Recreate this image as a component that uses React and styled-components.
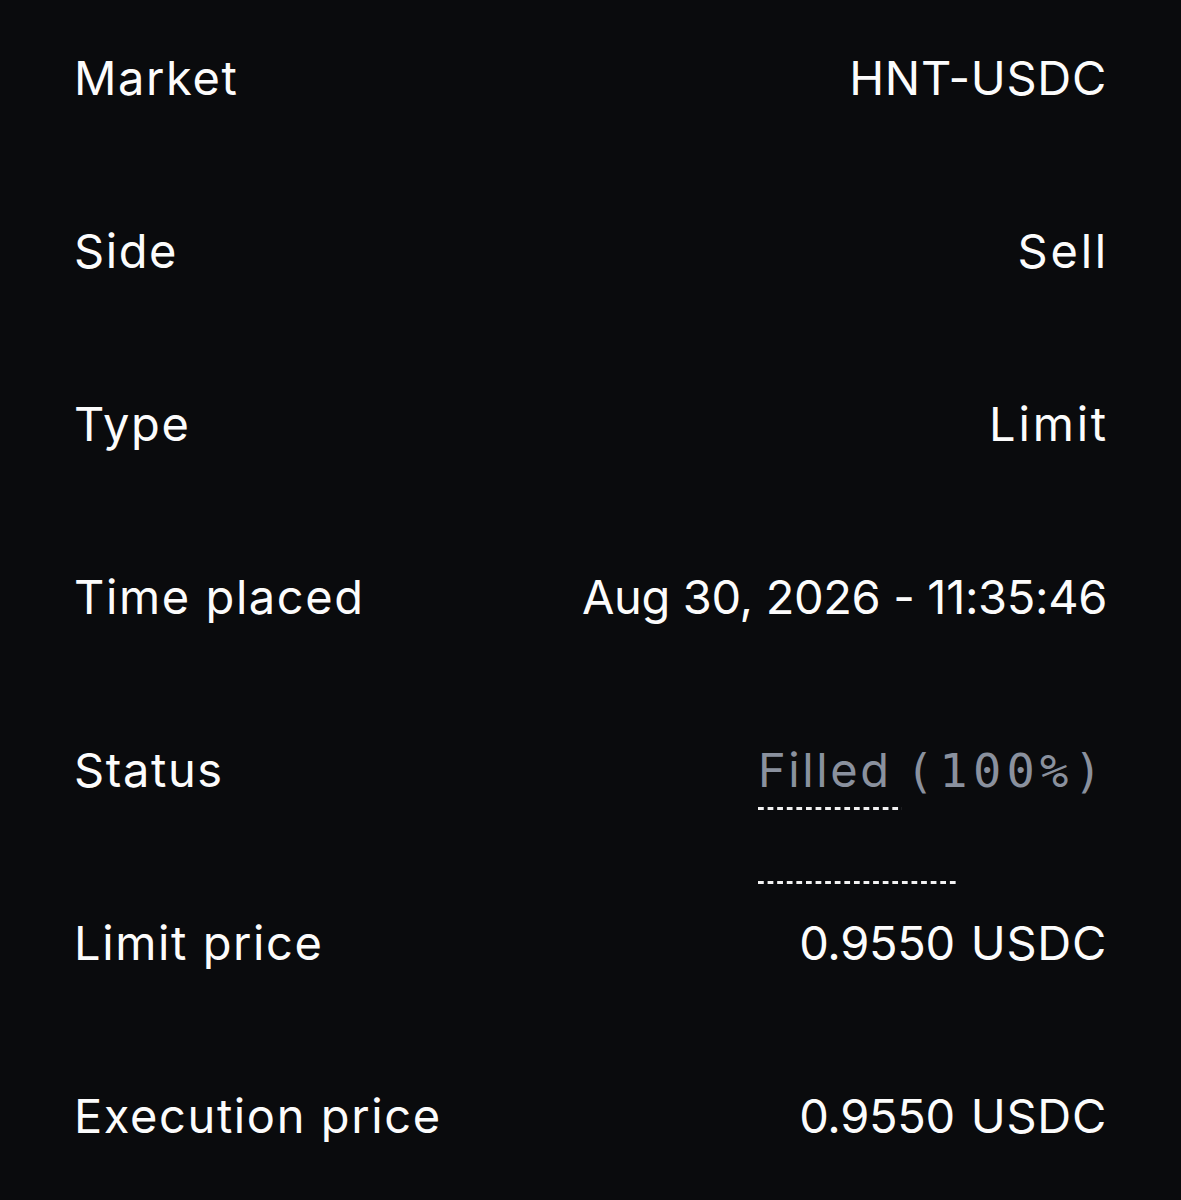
import styled, { createGlobalStyle } from "styled-components";

const GlobalStyle = createGlobalStyle`
  html, body {
    margin: 0;
    padding: 0;
    background: #0a0b0d;
  }
  body {
    font-family: Inter, "Noto Sans", sans-serif;
    -webkit-font-smoothing: antialiased;
  }
`

const Page = styled.div`
  width: 1181px;
  height: 1200px;
  box-sizing: border-box;
  background: #0a0b0d;
  padding: 50px 74px 0 75px;
  overflow: hidden;
`

const Row = styled.div`
  display: flex;
  justify-content: space-between;
  align-items: flex-start;
  height: 173px;
`

const Label = styled.div`
  font-size: 47px;
  line-height: 1.2;
  color: #fcfcfc;
  letter-spacing: 1.6px;
  margin-left: -1px;
`

const Value = styled.div`
  font-size: 47px;
  line-height: 1.2;
  color: #fcfcfc;
  letter-spacing: 2.8px;
  text-align: right;
  margin-right: ${p => (p.$caps ? "0" : "-2px")};
`

const Num = styled.span`
  letter-spacing: -0.35px;
`

const Caps = styled.span`
  letter-spacing: 0.7px;
`

const StatusWrap = styled.div`
  display: flex;
  flex-direction: column;
  align-items: flex-start;
  padding-right: 5px;
`

const Filled = styled.span`
  font-size: 47px;
  line-height: 1.2;
  color: #8a919e;
  letter-spacing: 2.6px;
`

const Pct = styled.span`
  font-family: "DejaVu Sans Mono", "Liberation Mono", monospace;
  font-size: 47px;
  letter-spacing: 5.3px;
  color: #8a919e;
  margin-left: 14px;
  margin-right: -5.3px;
`

const Dotted = styled.div`
  width: ${p => p.$w}px;
  height: 3px;
  margin-top: ${p => p.$top}px;
  background-image: linear-gradient(to right, #f2f2f2 55%, transparent 55%);
  background-size: 9.6px 3px;
`

const rows = [
  ["Market", <Caps>HNT-USDC</Caps>, true],
  ["Side", "Sell"],
  ["Type", "Limit"],
  ["Time placed", <Num>Aug 30, 2026 - 11:35:46</Num>, true],
  ["Status", null],
  ["Limit price", <><Num>0.9550</Num> <Caps>USDC</Caps></>, true],
  ["Execution price", <><Num>0.9550</Num> <Caps>USDC</Caps></>, true],
];

export default function App() {
  return (
    <Page>
      <GlobalStyle />
      {rows.map(([label, value, caps]) => (
        <Row key={label}>
          <Label>{label}</Label>
          {value ? (
            <Value $caps={caps}>{value}</Value>
          ) : (
            <StatusWrap>
              <div>
                <Filled>Filled</Filled>
                <Pct>(100%)</Pct>
              </div>
              <Dotted $w={144} $top={9} />
              <Dotted $w={198} $top={71} />
            </StatusWrap>
          )}
        </Row>
      ))}
    </Page>
  );
}
